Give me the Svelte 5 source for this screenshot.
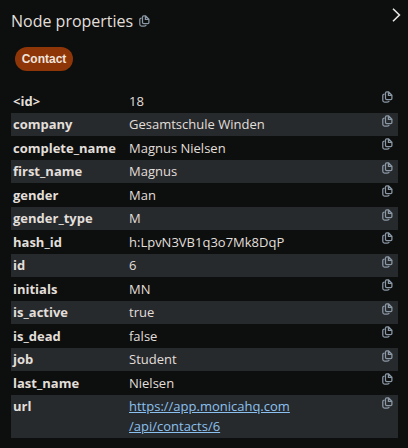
<script>
  const rows = [
    ['<id>', '18'],
    ['company', 'Gesamtschule Winden'],
    ['complete_name', 'Magnus Nielsen'],
    ['first_name', 'Magnus'],
    ['gender', 'Man'],
    ['gender_type', 'M'],
    ['hash_id', 'h:LpvN3VB1q3o7Mk8DqP'],
    ['id', '6'],
    ['initials', 'MN'],
    ['is_active', 'true'],
    ['is_dead', 'false'],
    ['job', 'Student'],
    ['last_name', 'Nielsen'],
    ['url', 'https://app.monicahq.com/api/contacts/6']
  ];
</script>

{#snippet copyIcon()}
  <svg class="copy" width="11" height="12" viewBox="0 0 11 12" fill="none" stroke="currentColor" stroke-width="1.25" aria-hidden="true">
    <path d="M3.5 2Q3.5.8 4.7.8H6.6L9.9 4.2V7.4Q9.9 8.5 8.8 8.5H4.7Q3.5 8.5 3.5 7.4ZM6.4.9V4.3H9.8" />
    <path d="M2.6 3.1Q.8 3.1.8 4.6V9.2Q.8 11 2.6 11H5.2Q6.9 11 7.2 10" />
  </svg>
{/snippet}

<section class="panel">
  <header>
    <h1>Node properties</h1>
    {@render copyIcon()}
    <button class="collapse" aria-label="Collapse">
      <svg width="9" height="15" viewBox="0 0 9 15" fill="none" stroke="currentColor" stroke-width="1.6">
        <path d="M1 .8L7.4 7L1 13.2" />
      </svg>
    </button>
  </header>
  <span class="label">Contact</span>
  <div class="properties">
    {#each rows as [key, value]}
      <div class="row" class:tall={key === 'url'}>
        <div class="key">{key}</div>
        <div class="value">
          {#if key === 'url'}
            <a href={value}>https://app.monicahq.com<wbr />/api/contacts/6</a>
          {:else}{value}{/if}
        </div>
        {@render copyIcon()}
      </div>
    {/each}
  </div>
</section>

<style>
  :global(body) { background: #0d0f0e; }
  .panel {
    box-sizing: border-box;
    height: 448px;
    padding: 8px 10px 0 11px;
    overflow: hidden;
    background: #0d0f0e;
    color: #e2dfdb;
    font: 13px/20px "Open Sans", "Noto Sans", sans-serif;
  }
  header { display: flex; height: 26px; align-items: flex-start; }
  h1 { margin: 0; font-size: 16px; line-height: 26px; font-weight: 400; white-space: nowrap; }
  header .copy { margin: 7px 0 0 6px; }
  .copy { flex: none; color: #8b98a6; }
  .collapse { display: flex; margin: 0 -3px 0 auto; padding: 0; border: 0; background: none; color: #e8e6e3; }
  .label {
    display: flex;
    align-items: center;
    justify-content: center;
    width: 58px;
    height: 24px;
    margin: 13px 0 18px 4px;
    border-radius: 12px;
    background: #8f3608;
    color: #f0e4dc;
    font: bold 12px/24px "Liberation Sans", Arial, sans-serif;
  }
  .row {
    display: flex;
    align-items: flex-start;
    box-sizing: border-box;
    height: 24px;
    padding: 2px 5px 2px 2px;
  }
  .row:nth-child(even) { height: 23px; padding-top: 1px; background: #272a2c; }
  .row:nth-child(even) .copy { margin-top: 1px; }
  .row.tall:nth-child(even) { height: 43px; }
  .key { width: 116px; flex: none; font-weight: 700; }
  .value { flex: 1; }
  a { display: block; width: 170px; color: #8bc1f0; text-decoration: underline; }
</style>
